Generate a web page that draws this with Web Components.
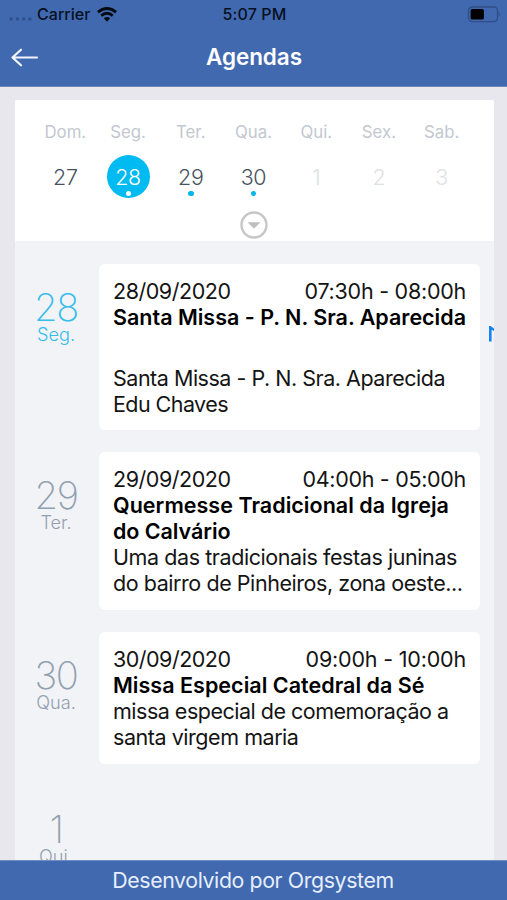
<!DOCTYPE html>
<html lang="pt-BR">
<head>
<meta charset="utf-8">
<title>Agendas</title>
<style>
html,body{margin:0;height:900px;overflow:hidden}
body{font-family:Inter,"Liberation Sans",sans-serif;background:#e8e7ee}
</style>
</head>
<body>
<agenda-app></agenda-app>
<script>
const define = (name, html, setup) => customElements.define(name, class extends HTMLElement {
  connectedCallback() {
    if (this.shadowRoot) return;
    const t = document.createElement('template');
    t.innerHTML = html;
    this.attachShadow({mode: 'open'}).append(t.content.cloneNode(true));
    if (setup) setup(this, this.shadowRoot);
  }
});

define('fit-line', `<style>:host{display:block;white-space:nowrap;width:max-content}</style><slot></slot>`, host => {
  // data-w is the line's advance width; tracking is adjusted to fill it
  const w = +host.getAttribute('data-w');
  if (!w) return;
  const r = document.createRange();
  r.selectNodeContents(host);
  const n = host.textContent.length;
  host.style.letterSpacing = ((w - r.getBoundingClientRect().width) / n).toFixed(3) + 'px';
});

define('status-bar', `<style>
:host{display:grid;grid-template-columns:1fr auto 1fr;align-items:center;height:28px;padding:0 7px 0 9px;color:#07101f;font-size:16px;font-weight:500}
.l{display:flex;align-items:center}.dots{margin-top:9px;margin-right:5px}.wifi{margin-left:6px}
.r{justify-self:end;display:flex}svg{display:block}
</style>
<div class="l"><svg class="dots" width="23" height="4" fill="#2e5090"><circle cx="2" cy="2" r="1.7"/><circle cx="8.3" cy="2" r="1.7"/><circle cx="14.6" cy="2" r="1.7"/><circle cx="20.9" cy="2" r="1.7"/></svg>
<fit-line data-w="53.5">Carrier</fit-line>
<svg class="wifi" width="20" height="15" viewBox="0 0 20 15"><g fill="none" stroke="#050a14" stroke-width="2.9"><path d="M.9 5.2Q10-2.4 19.1 5.2"/><path d="M4.2 8.7Q10 3.8 15.8 8.7"/></g><path d="M6.8 11.3Q10 8.6 13.2 11.3L10 14.7Z" fill="#050a14"/></svg></div>
<fit-line data-w="64">5:07 PM</fit-line>
<div class="r"><svg width="33" height="17" viewBox="0 0 33 17"><rect x="1.5" y="1" width="29" height="14.6" rx="3.8" fill="none" stroke="#304f89" stroke-width="1.4"/><rect x="3.6" y="3.1" width="13.3" height="10.4" rx="1.6" fill="#000"/><path d="M31.5 6q1.5.5 1.5 2.3T31.5 10.6Z" fill="#304f89"/></svg></div>`);

define('nav-bar', `<style>
:host{display:grid;grid-template-columns:1fr auto 1fr;align-items:center;height:58px;padding:0 11px;color:#fff;font-size:22.5px;font-weight:600;border-bottom:1px solid #6c88b8}
svg{display:block}
.t{letter-spacing:-.1px;padding:0 0 2px 1px}
</style><svg width="28" height="20" viewBox="0 0 28 20" fill="none" stroke="#f2f5ff" stroke-width="2.2" stroke-linecap="round" stroke-linejoin="round"><path d="M26 10.5H1.5M10 2.7L1.5 10.5L10 18.3"/></svg><div class="t"><slot></slot></div><span></span>`);

define('week-day', `<style>
:host{display:flex;flex-direction:column;align-items:center}
.n{font-size:16.8px;line-height:20px;color:#c3c8d0;margin-bottom:13px}
.d{display:grid;place-items:center;width:43px;height:43px;border-radius:50%;font-size:21.4px;font-weight:350;color:#45515c;position:relative;letter-spacing:-.3px}
:host([off]) .d{color:#dce1e5}
:host([sel]) .d{background:#00baf2;color:#fff}
i{display:none;position:absolute;left:19px;top:36px;width:5.4px;height:5.4px;border-radius:50%;background:#00b4ec}
:host([event]) i{display:block}:host([sel]) i{background:#fff}
</style><div class="n"></div><div class="d"><slot></slot><i></i></div>`, (h, r) => r.querySelector('.n').textContent = h.getAttribute('name'));

define('week-strip', `<style>
:host{display:flex;flex-direction:column;align-items:center;box-sizing:border-box;height:141px;background:#fff;padding:22px 2px 0 0;border-radius:2px 2px 0 0}
.g{display:grid;grid-template-columns:repeat(7,1fr);width:439px}
svg{display:block;margin-top:13px}
</style><div class="g"><slot></slot></div>
<svg width="28" height="28" viewBox="0 0 28 28"><circle cx="14" cy="14" r="12.5" fill="none" stroke="#c5c6c7" stroke-width="2.4"/><path d="M7.5 11.3h13L14 17.8Z" fill="#bfc0c1"/></svg>`);

define('day-mark', `<style>
:host{display:flex;flex-direction:column;align-items:center;box-sizing:border-box;width:84px;padding:25px 2px 0 0;color:#91a0b0}
:host([today]){color:#37bdec}
b{font-size:38.2px;font-weight:200;line-height:36px;letter-spacing:-1.4px}
span{font-size:18.2px;font-weight:350;line-height:18px}
</style><b><slot></slot></b><span></span>`, (h, r) => r.querySelector('span').textContent = h.getAttribute('name'));

define('event-card', `<style>
:host{display:block;box-sizing:border-box;width:381px;padding:15px 14px 0;background:#fff;border-radius:6px;font-size:21.5px;line-height:25.9px;color:#141414}
.t{display:flex;justify-content:space-between}
::slotted(.b){font-weight:600;color:#000}
::slotted(.gap){margin-top:35px}
</style><div class="t"><slot name="date"></slot><slot name="time"></slot></div><slot></slot>`);

define('agenda-row', `<style>:host{display:flex;align-items:flex-start;position:relative}</style><slot></slot>`);

define('app-footer', `<style>:host{display:flex;align-items:center;justify-content:center;height:40px;background:#4169af;color:#e6eeff;font-size:21.3px;box-sizing:border-box;border-top:1px solid #6f8fc4;padding:0 1px 1px 0}</style><slot></slot>`);

define('agenda-app', `<style>
:host{display:flex;flex-direction:column;width:507px;height:900px;overflow:hidden}
header{background:#4169af}
main{flex:1;min-height:0;overflow:hidden;margin:13px 13px 0 15px;background:#f2f3f6}
.list{display:flex;flex-direction:column;padding-top:23px}
.c1{height:166px}.c2{height:158px}.c3{height:132px}
.r1{height:188px}.r2{height:180px}.r3{height:154px}
.cut{position:absolute;left:474px;top:62px}
</style>
<header><status-bar></status-bar><nav-bar>Agendas</nav-bar></header>
<main>
<week-strip><week-day name="Dom.">27</week-day><week-day name="Seg." sel event>28</week-day><week-day name="Ter." event>29</week-day><week-day name="Qua." event>30</week-day><week-day name="Qui." off>1</week-day><week-day name="Sex." off>2</week-day><week-day name="Sab." off>3</week-day></week-strip>
<div class="list">
<agenda-row class="r1"><day-mark today name="Seg.">28</day-mark><event-card class="c1">
<fit-line slot="date" data-w="117.5">28/09/2020</fit-line><fit-line slot="time" data-w="161.5">07:30h - 08:00h</fit-line>
<fit-line class="b" data-w="353">Santa Missa - P. N. Sra. Aparecida</fit-line>
<fit-line class="gap" data-w="332">Santa Missa - P. N. Sra. Aparecida</fit-line><fit-line data-w="115">Edu Chaves</fit-line></event-card>
<svg class="cut" width="5" height="16"><path d="M0 0H1.6L5 2.4V5L2.6 3.8V15.5H0Z" fill="#1683f5"/></svg></agenda-row>
<agenda-row class="r2"><day-mark name="Ter.">29</day-mark><event-card class="c2">
<fit-line slot="date" data-w="117.5">29/09/2020</fit-line><fit-line slot="time" data-w="163.5">04:00h - 05:00h</fit-line>
<fit-line class="b" data-w="336">Quermesse Tradicional da Igreja</fit-line><fit-line class="b" data-w="117.5">do Calvário</fit-line>
<fit-line data-w="344">Uma das tradicionais festas juninas</fit-line><fit-line data-w="349.5">do bairro de Pinheiros, zona oeste...</fit-line></event-card></agenda-row>
<agenda-row class="r3"><day-mark name="Qua.">30</day-mark><event-card class="c3">
<fit-line slot="date" data-w="117.5">30/09/2020</fit-line><fit-line slot="time" data-w="160.5">09:00h - 10:00h</fit-line>
<fit-line class="b" data-w="311.5">Missa Especial Catedral da Sé</fit-line>
<fit-line data-w="335.5">missa especial de comemoração a</fit-line><fit-line data-w="185.5">santa virgem maria</fit-line></event-card></agenda-row>
<agenda-row><day-mark name="Qui.">1</day-mark></agenda-row>
</div></main>
<app-footer><fit-line data-w="281.5">Desenvolvido por Orgsystem</fit-line></app-footer>`);
</script>
</body>
</html>
